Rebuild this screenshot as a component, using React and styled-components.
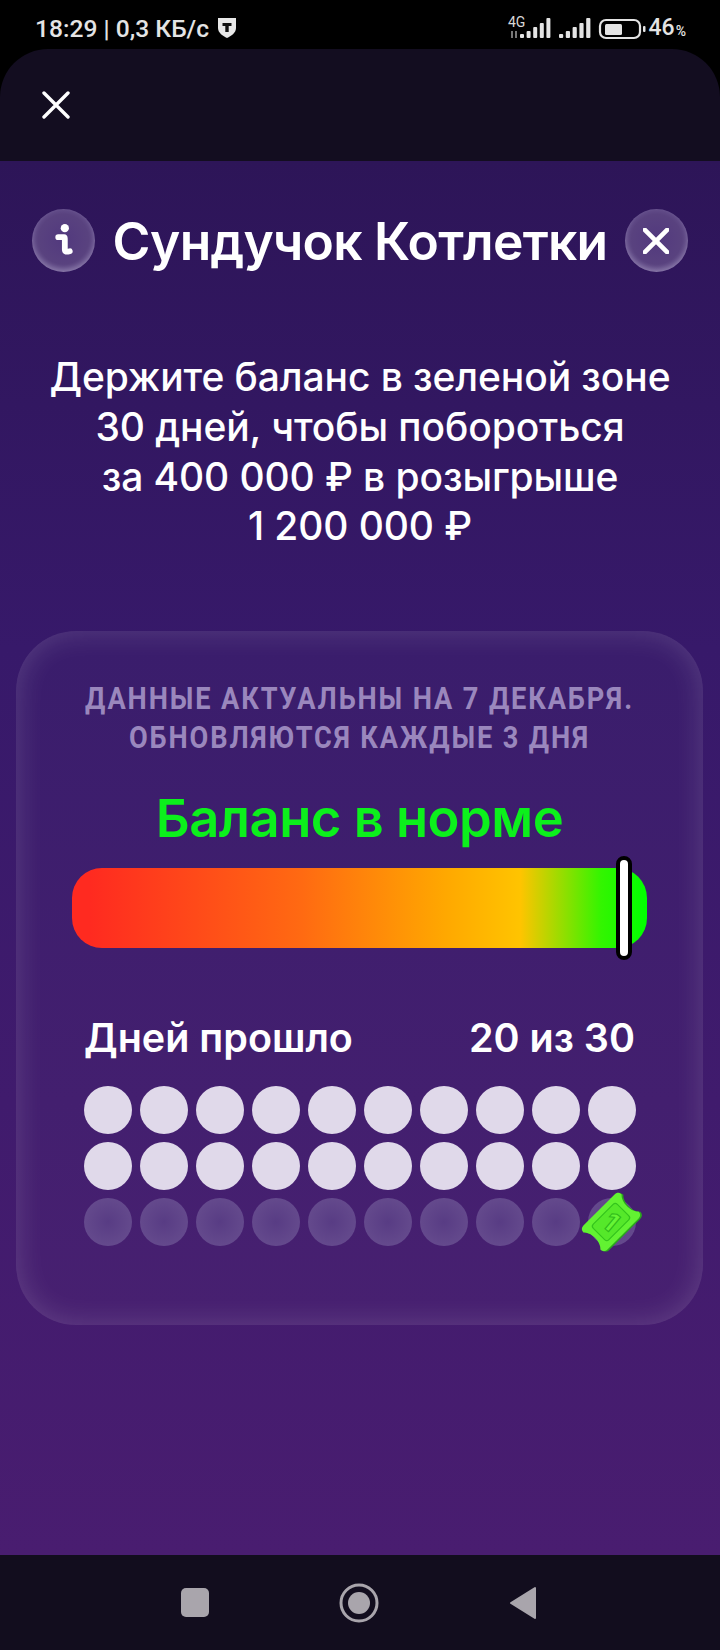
import React from "react";
import styled, { createGlobalStyle } from "styled-components";

const Global = createGlobalStyle`
  html, body { margin: 0; padding: 0; background: #000; }
  * { box-sizing: border-box; }
`;

const Screen = styled.div`
  width: 720px;
  height: 1650px;
  display: flex;
  flex-direction: column;
  background: #000;
  font-family: Inter, "Noto Sans", sans-serif;
  color: #fff;
  overflow: hidden;
`;

const StatusBar = styled.div`
  height: 49px;
  flex: none;
  display: flex;
  align-items: center;
  justify-content: space-between;
  padding: 7px 34px 0 35px;
  font-family: Roboto, sans-serif;
  color: #e4e4e4;
`;
const StatusGroup = styled.div`
  display: flex;
  align-items: center;
  gap: ${(p) => p.$gap || 0}px;
`;
const StatusText = styled.span`
  font-size: 24.6px;
  font-weight: 500;
`;
const Battery = styled.span`
  font-size: 23px;
  font-weight: 500;
  line-height: 28px;
  margin-left: 1px;
`;
const Percent = styled.span`
  font-size: 14px;
  font-weight: 500;
  line-height: 14px;
  margin: 6px 0 0 1px;
`;

const TopBar = styled.div`
  height: 112px;
  flex: none;
  background: #130d20;
  border-radius: 48px 48px 0 0;
  display: flex;
  align-items: center;
  padding: 0 0 0 42px;
`;

const Content = styled.div`
  flex: 1;
  display: flex;
  flex-direction: column;
  background: linear-gradient(180deg, #2d1558 0%, #37196a 35%, #491d70 100%);
`;

const Header = styled.div`
  margin-top: 48px;
  padding: 0 32px;
  display: flex;
  align-items: center;
  justify-content: space-between;
`;
const GlassButton = styled.div`
  width: 63px;
  height: 63px;
  flex: none;
  border-radius: 50%;
  display: flex;
  align-items: center;
  justify-content: center;
  background: radial-gradient(circle at 50% 48%, #52397e 0%, #59427f 55%, #6f5b98 82%, #8a7ab0 100%);
  box-shadow: inset 0 -3px 5px rgba(255, 255, 255, 0.22);
`;
const Title = styled.h1`
  margin: 2px 0 0;
  font-size: 51.5px;
  font-weight: 600;
  line-height: 61px;
  letter-spacing: -0.7px;
  white-space: nowrap;
`;

const Description = styled.p`
  margin: 80px 0 0;
  font-size: 39px;
  font-weight: 500;
  line-height: 49.8px;
  text-align: center;
  white-space: pre-line;
  letter-spacing: -0.1px;
`;

const Card = styled.section`
  margin: 80px 0 0 16px;
  width: 687px;
  height: 694px;
  border-radius: 60px;
  padding: 48px 56px 0;
  display: flex;
  flex-direction: column;
  background: rgba(255, 255, 255, 0.02);
  box-shadow: inset 0 0 30px rgba(255, 255, 255, 0.16);
`;
const Note = styled.div`
  margin: 0 -100px;
  font-family: Roboto, sans-serif;
  font-size: 32px;
  font-weight: 700;
  line-height: 39px;
  letter-spacing: 2.2px;
  text-align: center;
  color: #9a87bd;
  white-space: pre;
  transform: scaleX(0.85);
`;
const Status = styled.div`
  margin-top: 31px;
  font-size: 52.5px;
  font-weight: 600;
  line-height: 60px;
  letter-spacing: -0.5px;
  color: #0cf01c;
  text-align: center;
`;
const Gauge = styled.div`
  position: relative;
  margin-top: 20px;
  height: 80px;
  border-radius: 30px;
  background: linear-gradient(90deg, #ff2a20 3%, #ff6a12 40%, #ffa800 65%, #ffc400 78%, #33f500 92%, #00ff00 100%);
`;
const Marker = styled.div`
  position: absolute;
  left: 544px;
  top: -12px;
  width: 16px;
  height: 104px;
  border-radius: 8px;
  background: #fff;
  border: 4px solid #000;
`;
const DaysRow = styled.div`
  margin-top: 67px;
  padding: 0 12px;
  display: flex;
  justify-content: space-between;
  align-items: center;
  font-size: 39.5px;
  font-weight: 600;
  line-height: 46px;
`;
const DotGrid = styled.div`
  position: relative;
  margin: 25px 12px 0;
  display: grid;
  grid-template-columns: repeat(10, 48px);
  gap: 8px;
`;
const Dot = styled.div`
  width: 48px;
  height: 48px;
  border-radius: 50%;
  background: ${(p) =>
    p.$done ? "#e0d9ea" : "radial-gradient(circle, #583c84 0%, #694f90 100%)"};
`;
const Ticket = styled.svg`
  position: absolute;
  left: 493px;
  bottom: -10px;
  width: 68px;
  height: 68px;
`;

const NavBar = styled.div`
  height: 95px;
  flex: none;
  background: #120d1e;
  display: flex;
  align-items: center;
  justify-content: space-between;
  padding: 0 183px 0 181px;
`;
const NavSquare = styled.div`
  width: 28px;
  height: 29px;
  border-radius: 5px;
  background: #a9a5ac;
`;

const CloseIcon = ({ size, stroke, color = "#fff" }) => (
  <svg width={size} height={size} viewBox="0 0 28 28">
    <path d="M2 2 L26 26 M26 2 L2 26" stroke={color} strokeWidth={stroke} strokeLinecap="round" />
  </svg>
);

const Shield = () => (
  <svg width="20" height="22" viewBox="0 0 20 22">
    <path d="M1 1 H19 V11 C19 16 14 19 10 21 C6 19 1 16 1 11 Z" fill="#e8e8e8" />
    <rect x="5.5" y="6" width="9" height="3" fill="#111" />
    <rect x="8.3" y="6" width="3.4" height="9" fill="#111" />
  </svg>
);

const Signal = ({ x, step, width }) => (
  <g fill="#e4e4e4">
    {[4, 7, 11, 15, 20].map((h, i) => (
      <rect key={i} x={x + i * step} y={36 - h} width={width} height={h} rx="1" />
    ))}
  </g>
);

const StatusIcons = () => (
  <svg width="141" height="44" viewBox="505 4 141 44" style={{ display: "block" }}>
    <text x="506" y="25" fontFamily="Roboto, sans-serif" fontSize="14" fill="#d8d8d8">4G</text>
    <path d="M510 29 v7 M514 29 v7" stroke="#777" strokeWidth="2" />
    <Signal x={518} step={6.6} width={4} />
    <Signal x={557} step={6.8} width={4.2} />
    <rect x="598" y="18" width="40" height="18" rx="6" fill="none" stroke="#e4e4e4" strokeWidth="2.2" />
    <rect x="603" y="22" width="17" height="11" rx="1.5" fill="#e4e4e4" />
    <rect x="641" y="24" width="2.5" height="6" rx="1" fill="#e4e4e4" />
  </svg>
);

const ticketPath =
  "M12 17 H56 C59 17 61 19 61 22 C55 27 55 41 61 46 C61 49 59 51 56 51 H12 C9 51 7 49 7 46 C13 41 13 27 7 22 C7 19 9 17 12 17 Z";

const TicketIcon = () => (
  <Ticket viewBox="0 0 68 68">
    <g transform="rotate(-45 34 34)">
      <path d={ticketPath} fill="#2aa81c" transform="translate(1 1.5)" />
      <path d={ticketPath} fill="#62f232" />
      <rect x="17" y="23" width="34" height="22" rx="3" fill="#55e82a" stroke="#33c41c" strokeWidth="1.2" />
    </g>
    <text
      x="34"
      y="43"
      textAnchor="middle"
      fontFamily="Inter, sans-serif"
      fontWeight="800"
      fontSize="26"
      fill="#66f535"
      stroke="#2fbb1a"
      strokeWidth="1.1"
      transform="rotate(40 34 34)"
    >
      1
    </text>
  </Ticket>
);

const days = Array.from({ length: 30 }, (_, i) => i < 20);

export default function App() {
  return (
    <Screen>
      <Global />
      <StatusBar>
        <StatusGroup $gap={8}>
          <StatusText>18:29 | 0,3 КБ/с</StatusText>
          <Shield />
        </StatusGroup>
        <StatusGroup>
          <StatusIcons />
          <Battery>46</Battery>
          <Percent>%</Percent>
        </StatusGroup>
      </StatusBar>
      <TopBar>
        <CloseIcon size={28} stroke={3.4} />
      </TopBar>
      <Content>
        <Header>
          <GlassButton>
            <svg width="20" height="33" viewBox="0 0 24 40">
              <circle cx="13" cy="5" r="5" fill="#fff" />
              <path d="M5 16 H12 C13 16 13 17 13 18 V31 C13 34 15 34 19 33" fill="none" stroke="#fff" strokeWidth="7" strokeLinecap="round" strokeLinejoin="round" />
            </svg>
          </GlassButton>
          <Title>Сундучок Котлетки</Title>
          <GlassButton>
            <CloseIcon size={26} stroke={5} />
          </GlassButton>
        </Header>
        <Description>
          {"Держите баланс в зеленой зоне\n30 дней, чтобы побороться\nза 400 000 ₽ в розыгрыше\n1 200 000 ₽"}
        </Description>
        <Card>
          <Note>{"ДАННЫЕ АКТУАЛЬНЫ НА 7 ДЕКАБРЯ.\nОБНОВЛЯЮТСЯ КАЖДЫЕ 3 ДНЯ"}</Note>
          <Status>Баланс в норме</Status>
          <Gauge>
            <Marker />
          </Gauge>
          <DaysRow>
            <span>Дней прошло</span>
            <span>20 из 30</span>
          </DaysRow>
          <DotGrid>
            {days.map((done, i) => (
              <Dot key={i} $done={done} />
            ))}
            <TicketIcon />
          </DotGrid>
        </Card>
      </Content>
      <NavBar>
        <NavSquare />
        <svg width="40" height="40" viewBox="0 0 40 40">
          <circle cx="20" cy="20" r="18" fill="none" stroke="#a9a5ac" strokeWidth="3" />
          <circle cx="20" cy="20" r="11" fill="#a9a5ac" />
        </svg>
        <svg width="28" height="34" viewBox="0 0 28 34">
          <path d="M26 2 V32 L2 17 Z" fill="#a9a5ac" stroke="#a9a5ac" strokeWidth="2" strokeLinejoin="round" />
        </svg>
      </NavBar>
    </Screen>
  );
}
